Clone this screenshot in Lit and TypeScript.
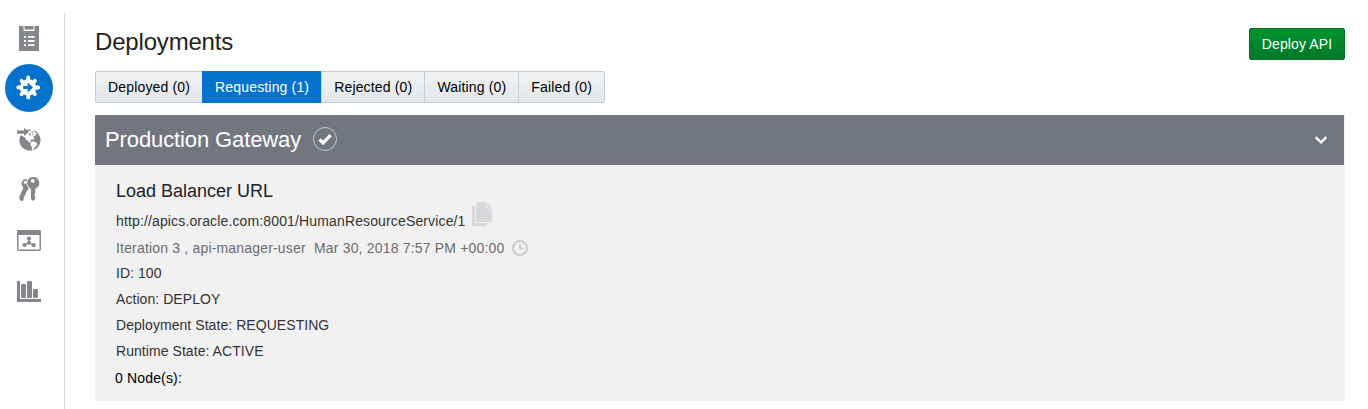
import { LitElement, html, css, svg } from "lit";
import { customElement, property, state } from "lit/decorators.js";

const icons = {
  catalog: svg`
    <path fill="currentColor" fill-rule="evenodd" d="M3 1h4.500v5h11V1H23v25H3z
      M8 11v1.700h2V11z M12 11v1.700h6.500V11z M8 15v2h2v-2z M12 15v2h6.500v-2z M8 19.300V21h2v-1.700z M12 19.300V21h6.500v-1.700z"/>
    <path fill="currentColor" d="M8.500 1h9v3.500h-9z"/>`,
  deployments: svg`
    <circle cx="12.200" cy="12.500" r="8.200" fill="currentColor"/>
    <path stroke="currentColor" stroke-width="3.800" stroke-linecap="round"
      d="M12.200 2.500v20M2.200 12.500h20M5.500 5.800l13.400 13.400M18.900 5.800L5.500 19.200"/>
    <path fill="#0572ce" d="M7.200 11h4.500V7.600l5.300 4.900-5.300 4.900V14H7.200z"/>`,
  network: svg`
    <circle cx="14" cy="14.200" r="10.600" fill="currentColor"/>
    <path fill="#fff" d="M3 6.500h7L14.500 3h2l1.300 1.500 1 1.800 1.700 1.200-.6 1.800-1.700.6-.7 1.700 1.200 1.200-1.700 1-1.500-.6
      -1.200 1.600.6 1.700-1.300.3-1.400-1.700L10 13.800 9 11.500 5.500 9.500H3z"/>
    <path fill="#fff" d="M14.800 16.500l1.800-1.300 2.800.8 1.800 1.500-.6 2.200-2 1.700-1.500 2.600-1.300.2.200-3.200-1.500-2z"/>
    <path fill="currentColor" d="M1 4.500h7V2l5.200 4L8 10V7.700H1z"/>
    <path fill="currentColor" d="M12.500 3.800l1.700-.3.500 1.300-1 .4zM15.300 5l1.500.2.300 1.500-1.200.2z
      M13.300 7.200l1.700.3-.3 1.600-1.800.6zM16.400 8l1.400.3-.6 1.200-1-.3z"/>`,
  keys: svg`
    <path fill="currentColor" d="M9.700 1.800a5 5 0 0 0-3.600 7.400l1.300 1.300L3.200 20.300l.9 3.200 2.700.4 1.300-2.600-.6-1.200
      1.300-.7-.2-1.300 1.300-.6-.2-1.400L15 8z"/>
    <circle cx="9.300" cy="5.200" r="1.500" fill="#fff"/>
    <path fill="currentColor" stroke="#fff" stroke-width="1.400" paint-order="stroke"
      d="M17.200 0a6 6 0 0 0-3 11.200l.8.700V22l2 2 2.200-2v-2l-1-.8 1-.9-1-1.100 1-1v-4.300l1-.7A6 6 0 0 0 17.200 0z"/>
    <circle cx="16.700" cy="3.800" r="1.900" fill="#fff"/>`,
  services: svg`
    <rect x="1.750" y="3.750" width="22.500" height="19.500" rx="1.200" fill="none" stroke="currentColor" stroke-width="1.500"/>
    <path fill="currentColor" d="M1 4.500Q1 3 2.500 3h21Q25 3 25 4.500V8H1z"/>
    <path stroke="currentColor" stroke-width="1.200" fill="none" d="M13 11.300v4.500L8.500 18M13 15.800l4.500 2.200"/>
    <g fill="currentColor">
      <circle cx="13" cy="11.500" r="2.100"/><circle cx="13" cy="15.800" r="2.100"/>
      <circle cx="8.500" cy="18" r="2.100"/><circle cx="17.600" cy="18.200" r="2.100"/>
    </g>`,
  analytics: svg`
    <path fill="currentColor" d="M1 3h3v18h21v3H1z"/>
    <g fill="currentColor">
      <rect x="5" y="6" width="5" height="14" rx="1"/>
      <rect x="11" y="3" width="5" height="17" rx="1"/>
      <rect x="17" y="11" width="5" height="9" rx="1"/>
    </g>`,
};

type IconName = keyof typeof icons;

@customElement("nav-rail")
export class NavRail extends LitElement {
  @property({ type: String }) selected: IconName = "deployments";

  render() {
    return html`
      <nav>
        ${(Object.keys(icons) as IconName[]).map(
          (name) => html`
            <a class="item ${name === this.selected ? "selected" : ""}">
              <span class="disc">
                <svg width="26" height="26" viewBox="0 0 26 26">${icons[name]}</svg>
              </span>
            </a>
          `
        )}
      </nav>
    `;
  }

  static styles = css`
    :host {
      display: block;
      box-sizing: border-box;
      width: 65px;
      border-right: 1px solid #d6dade;
    }
    nav {
      display: flex;
      flex-direction: column;
      margin-top: -0.5px;
      padding-left: 5px;
    }
    .item {
      display: flex;
      align-items: center;
      height: 50.6px;
      color: #84878b;
    }
    .disc {
      display: flex;
      align-items: center;
      justify-content: center;
      width: 48px;
      height: 48px;
      border-radius: 50%;
    }
    .selected {
      color: #fff;
    }
    .selected .disc {
      background-color: #0572ce;
    }
    svg {
      display: block;
    }
  `;
}

@customElement("status-tabs")
export class StatusTabs extends LitElement {
  @state() active = "Requesting";

  tabs = [
    { label: "Deployed", count: 0 },
    { label: "Requesting", count: 1 },
    { label: "Rejected", count: 0 },
    { label: "Waiting", count: 0 },
    { label: "Failed", count: 0 },
  ];

  render() {
    return html`
      ${this.tabs.map(
        (tab) => html`
          <button
            class=${tab.label === this.active ? "active" : ""}
            @click=${() => (this.active = tab.label)}
          >${tab.label} (${tab.count})</button>
        `
      )}
    `;
  }

  static styles = css`
    :host {
      display: flex;
      box-sizing: border-box;
      width: fit-content;
      height: 32px;
      border: 1px solid #c4ced7;
      border-radius: 2px;
    }
    button {
      margin: 0;
      padding: 0 12px;
      border: 0;
      border-left: 1px solid #c4ced7;
      background: linear-gradient(#f0f2f4, #e3e7ea);
      color: #000;
      font: 14px "Liberation Sans", Arial, sans-serif;
      letter-spacing: 0.16px;
      white-space: nowrap;
    }
    button:first-child {
      border-left: 0;
    }
    button.active {
      margin: -1px 0;
      border-color: #0572ce;
      background: #0572ce;
      color: #fff;
    }
  `;
}

@customElement("gateway-card")
export class GatewayCard extends LitElement {
  @property({ type: String }) name = "";

  render() {
    return html`
      <header>
        <h2>${this.name}</h2>
        <svg class="check" width="26" height="26" viewBox="0 0 26 26" fill="none">
          <circle cx="13" cy="13" r="11.500" stroke="#c9cacf"/>
          <path d="M7.500 13.300l3.600 3.600 7.500-7.700" stroke="#fff" stroke-width="3.200"/>
        </svg>
        <svg class="chevron" width="14" height="10" viewBox="0 0 14 10" fill="none">
          <path d="M1.700 2.200L7 7.300l5.300-5.100" stroke="#fff" stroke-width="2.300"/>
        </svg>
      </header>
      <section>
        <h3>Load Balancer URL</h3>
        <div class="row url">
          <span>http://apics.oracle.com:8001/HumanResourceService/1</span>
          <svg width="20" height="24" viewBox="0 0 20 24" fill="#d6d8db">
            <path d="M0 4h3v17h12v3H0z"/>
            <path d="M4 0h9.500v6.500H20V20H4z"/>
            <path d="M14.500 0v5.500H20z"/>
          </svg>
        </div>
        <div class="row meta">
          <span>Iteration 3 , api-manager-user&nbsp; Mar 30, 2018 7:57 PM +00:00</span>
          <svg width="16" height="16" viewBox="0 0 16 16" fill="none" stroke="#c9cccf" stroke-width="2">
            <circle cx="8" cy="8" r="7"/>
            <path d="M8 4v4.500h4"/>
          </svg>
        </div>
        <div class="row">ID: 100</div>
        <div class="row">Action: DEPLOY</div>
        <div class="row">Deployment State: REQUESTING</div>
        <div class="row">Runtime State: ACTIVE</div>
        <div class="row nodes">0 Node(s):</div>
      </section>
    `;
  }

  static styles = css`
    :host {
      display: block;
      height: 286px;
      border-radius: 0 0 2px 2px;
      background-color: #f1f1f1;
    }
    header {
      display: flex;
      align-items: center;
      box-sizing: border-box;
      height: 50px;
      margin-right: 1px;
      padding: 0 16px 0 10px;
      background-color: #737680;
      color: #fff;
    }
    h2 {
      margin: 0;
      font-size: 22px;
      font-weight: 400;
      letter-spacing: -0.11px;
      line-height: 48px;
    }
    .check {
      margin: -2px 0 0 11px;
    }
    .chevron {
      margin: -1px 0 0 auto;
    }
    section {
      padding: 13px 21px 0;
      color: #333;
      font-size: 14px;
      letter-spacing: 0.06px;
    }
    h3 {
      margin: 0;
      font-size: 18px;
      font-weight: 400;
      letter-spacing: 0;
      line-height: 26px;
      color: #222;
    }
    .row {
      display: flex;
      height: 26px;
      line-height: 26px;
      white-space: pre;
    }
    .url {
      height: 31px;
      line-height: 35px;
      letter-spacing: 0.14px;
    }
    .url svg {
      margin: -2px 0 0 6px;
    }
    .meta {
      height: 25px;
      color: #6b6b6b;
      letter-spacing: 0.18px;
    }
    .meta svg {
      margin: 5px 0 0 8px;
    }
    .nodes {
      margin: 1px 0 0 -1px;
      color: #000;
      letter-spacing: 0.16px;
    }
  `;
}

@customElement("app-root")
export class AppRoot extends LitElement {
  render() {
    return html`
      <nav-rail></nav-rail>
      <main>
        <div class="title">
          <h1>Deployments</h1>
          <button>Deploy API</button>
        </div>
        <status-tabs></status-tabs>
        <gateway-card name="Production Gateway"></gateway-card>
      </main>
    `;
  }

  static styles = css`
    :host {
      display: flex;
      box-sizing: border-box;
      height: 409px;
      padding-top: 13px;
      overflow: hidden;
      background-color: #fff;
      font-family: "Liberation Sans", Arial, sans-serif;
    }
    main {
      flex: 1;
      padding: 15px 23px 0 30px;
    }
    .title {
      display: flex;
      justify-content: space-between;
      height: 43px;
    }
    h1 {
      margin: 0;
      font-size: 24px;
      font-weight: 400;
      letter-spacing: -0.18px;
      line-height: 28px;
      color: #222;
    }
    .title button {
      width: 96px;
      height: 32px;
      padding: 0;
      border: 1px solid #00752a;
      border-radius: 2px;
      background: linear-gradient(#009530, #00782a);
      color: #fff;
      font: 14px "Liberation Sans", Arial, sans-serif;
      letter-spacing: 0.1px;
    }
    gateway-card {
      margin-top: 12px;
    }
  `;
}
